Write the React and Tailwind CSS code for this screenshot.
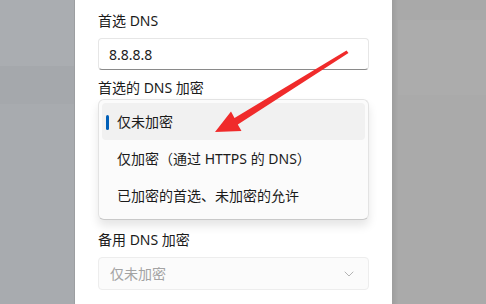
import { useState } from 'react'

const options = [
  '仅未加密',
  '仅加密（通过 HTTPS 的 DNS）',
  '已加密的首选、未加密的允许',
]

function Chevron() {
  return (
    <svg width="10" height="6" viewBox="0 0 10 6" fill="none">
      <path d="M1 1l4 4 4-4" stroke="#b4b4b4" strokeWidth="1" strokeLinecap="round" strokeLinejoin="round" />
    </svg>
  )
}

function Arrow() {
  // red annotation arrow over the dropdown
  return (
    <svg className="absolute inset-0 pointer-events-none" width="486" height="304" viewBox="0 0 486 304">
      <polygon
        points="346.5,50.5 234.5,118 231,111.5 215,132 241.5,131 237.8,124.6 348.5,53"
        fill="#f02b2b"
      />
    </svg>
  )
}

export default function App() {
  const [selected] = useState(0)

  return (
    <div
      className="relative w-[486px] h-[304px] flex overflow-hidden text-[14px] text-[#1b1b1b]"
      style={{ fontFamily: '"Noto Sans", "Noto Sans CJK SC", sans-serif' }}
    >
      {/* left backdrop */}
      <div className="w-[74px] flex flex-col">
        <div className="h-[66px] bg-[#aaadb1]" />
        <div className="h-[38px] bg-[#a5a8ac]" />
        <div className="flex-1 bg-[#a8abaf]" />
      </div>

      {/* dialog */}
      <div className="w-[318px] bg-white border-l border-[#9c9ea1] px-[23px] pt-[11px]">
        <div className="h-[20px] leading-[20px]">首选 DNS</div>
        <div className="mt-[7px] h-[32px] rounded-[4px] border border-[#e6e6e6] border-b-[#8a8a8a] pl-[10px] flex items-center bg-white">
          8.8.8.8
        </div>

        <div className="mt-[8px] h-[20px] leading-[20px]">首选的 DNS 加密</div>
        <div className="mt-[1px] rounded-[6px] border border-[#e3e3e3] border-b-[#c9c9c9] bg-[#fbfbfb] px-[3px] pt-[3px] pb-[5px] shadow-[0_6px_10px_rgba(0,0,0,0.10)]">
          {options.map((o, i) => (
            <div
              key={o}
              className={
                'relative h-[37px] rounded-[4px] flex items-center pl-[15px] ' +
                (i === selected ? 'bg-[#f1f1f1]' : '')
              }
            >
              {i === selected && (
                <span className="absolute left-[4px] top-[12px] w-[3px] h-[15px] rounded-full bg-[#005fb8]" />
              )}
              {o}
            </div>
          ))}
        </div>

        <div className="mt-[10px] h-[20px] leading-[20px]">备用 DNS 加密</div>
        <div className="mt-[7px] h-[33px] rounded-[4px] border border-[#ededed] bg-[#fbfbfb] pl-[11px] pr-[14px] flex items-center justify-between text-[#a3a3a3]">
          <span>仅未加密</span>
          <Chevron />
        </div>
      </div>

      {/* right backdrop */}
      <div className="w-[6px] bg-gradient-to-r from-[#9d9d9d] to-[#a9a9a9]" />
      <div className="flex-1 flex flex-col">
        <div className="h-[20px] bg-[#a9a9a9]" />
        <div className="h-[75px] bg-[#acacac]" />
        <div className="flex-1 bg-[#aaaaaa]" />
      </div>

      <Arrow />
    </div>
  )
}
